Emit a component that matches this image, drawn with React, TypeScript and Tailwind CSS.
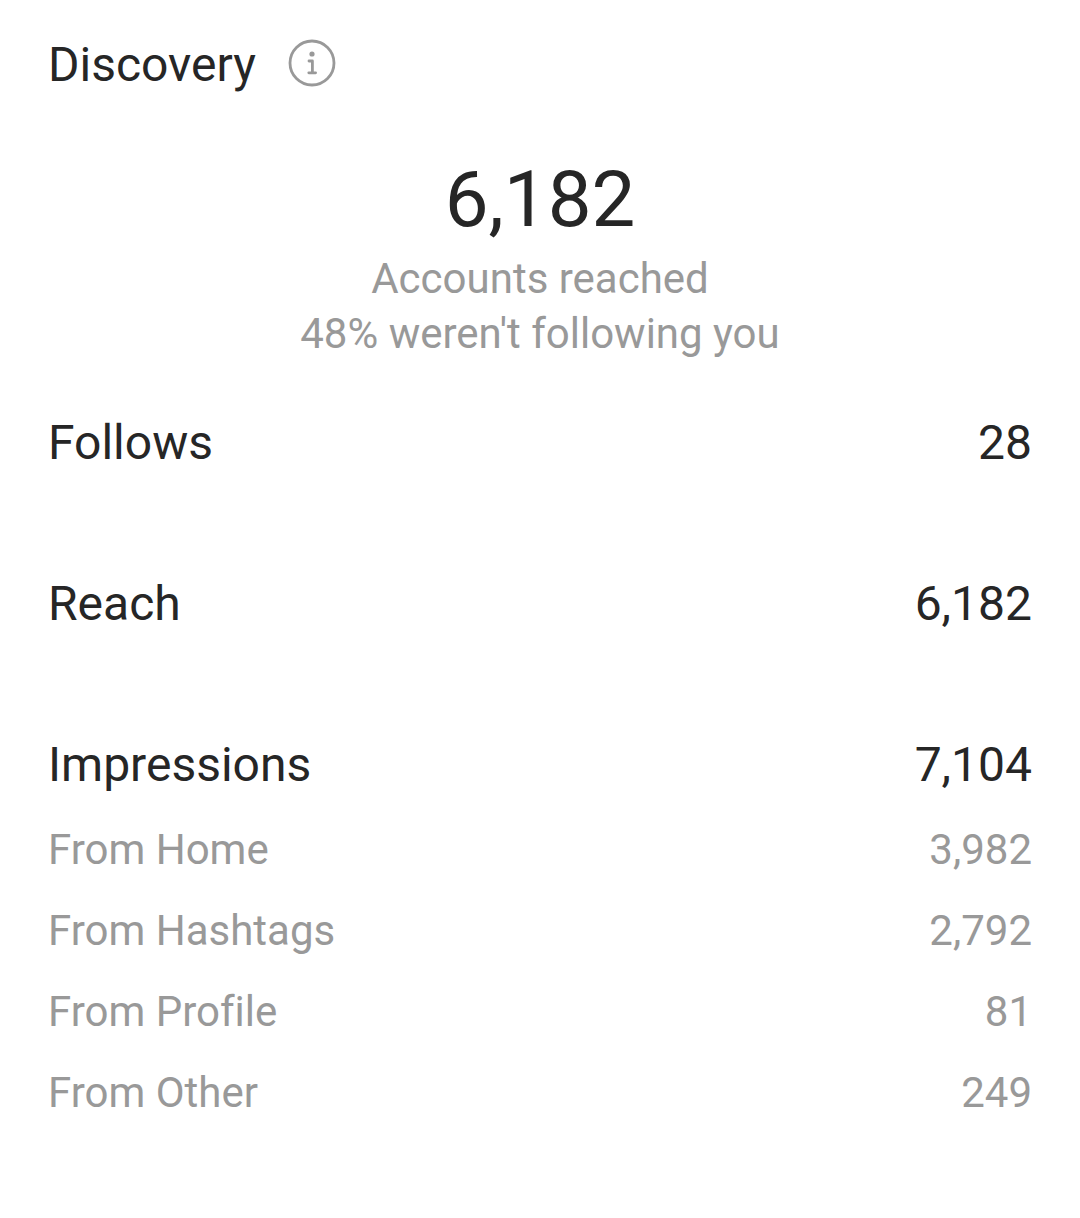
const rows = [
  { label: 'Follows', value: '28' },
  { label: 'Reach', value: '6,182' },
  { label: 'Impressions', value: '7,104' },
];

const sources = [
  { label: 'From Home', value: '3,982' },
  { label: 'From Hashtags', value: '2,792' },
  { label: 'From Profile', value: '81' },
  { label: 'From Other', value: '249' },
];

function InfoIcon() {
  return (
    <svg className="w-12 h-12" viewBox="0 0 48 48" fill="none" aria-hidden="true">
      <circle cx="24" cy="24" r="22" stroke="#999999" strokeWidth="2.8" />
      <circle cx="24" cy="15" r="2.6" fill="#999999" />
      <path
        d="M21 22h3.4v11.8M20.8 33.8h6.8"
        stroke="#999999"
        strokeWidth="2.8"
        strokeLinecap="round"
        strokeLinejoin="round"
      />
    </svg>
  );
}

export default function App() {
  return (
    <main className="bg-white px-12 pt-[33px] pb-20 font-['Roboto',sans-serif] text-[#262626] [font-variant-ligatures:none]">
      {/* Header */}
      <header className="flex items-center gap-8">
        <h1 className="text-5xl leading-16">Discovery</h1>
        <button type="button" aria-label="About discovery" className="pb-1">
          <InfoIcon />
        </button>
      </header>

      {/* Summary */}
      <section className="pt-13 text-center">
        <p className="text-[78px] leading-[102px]">6,182</p>
        <p className="text-[42px] leading-[55px] text-[#999999]">Accounts reached</p>
        <p className="text-[42px] leading-[55px] text-[#999999]">48% weren't following you</p>
      </section>

      {/* Totals */}
      <dl className="pt-[50px]">
        {rows.map((row) => (
          <div key={row.label} className="flex justify-between h-[161px] last:h-auto text-5xl leading-16">
            <dt>{row.label}</dt>
            <dd>{row.value}</dd>
          </div>
        ))}
      </dl>

      {/* Impressions by source */}
      <dl className="pt-3">
        {sources.map((source) => (
          <div key={source.label} className="flex justify-between text-[42px] leading-[81px] text-[#999999]">
            <dt>{source.label}</dt>
            <dd>{source.value}</dd>
          </div>
        ))}
      </dl>
    </main>
  );
}
